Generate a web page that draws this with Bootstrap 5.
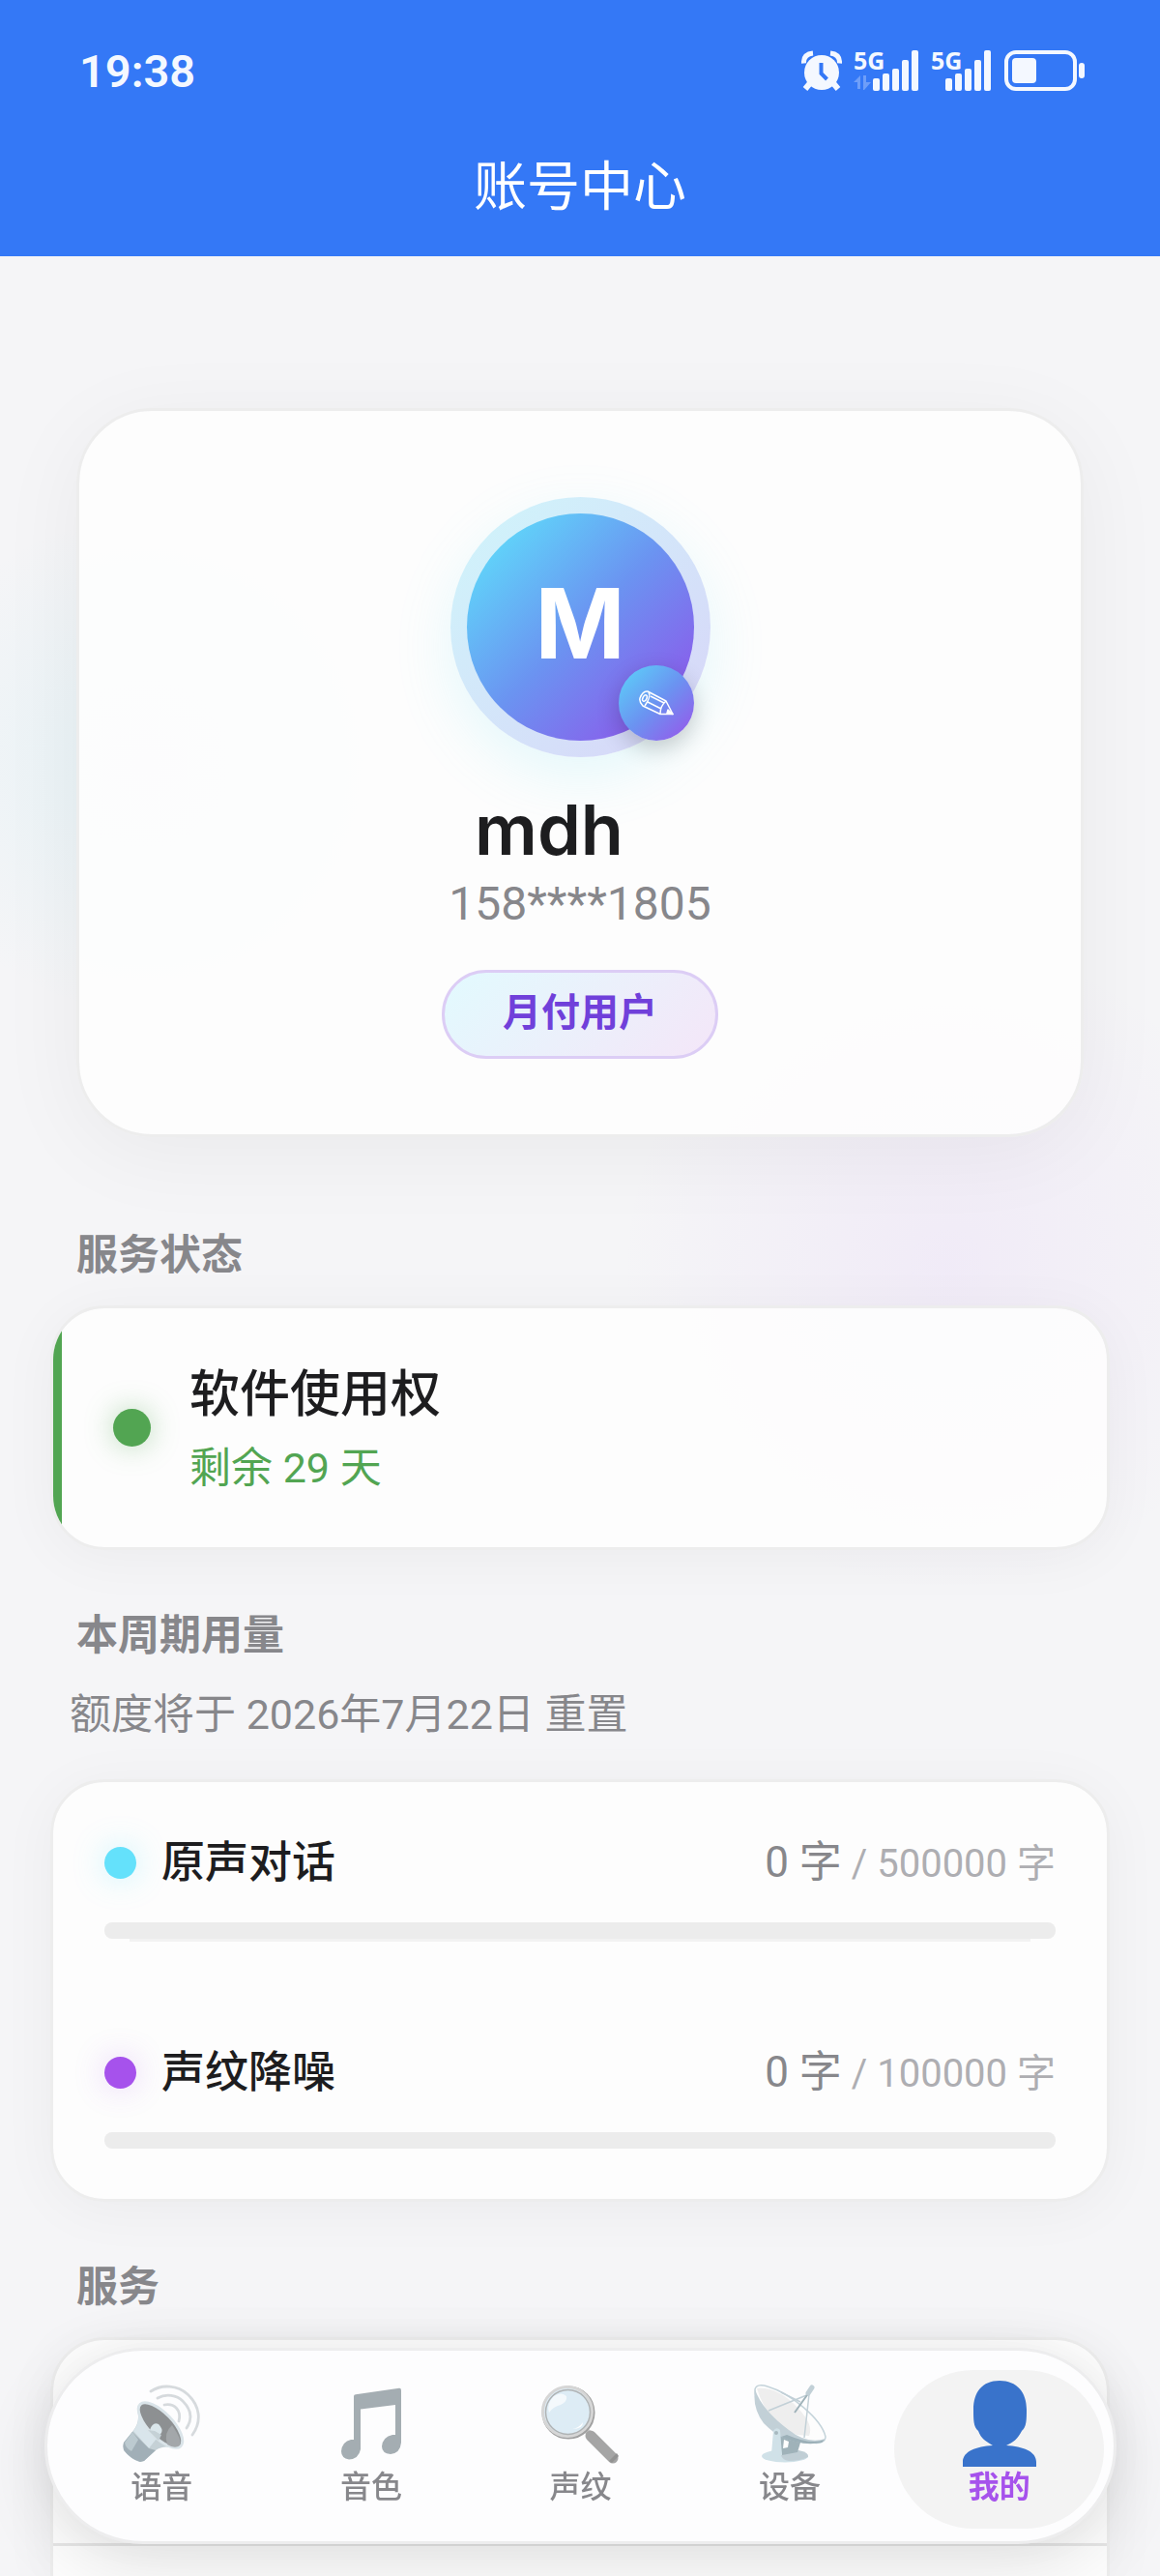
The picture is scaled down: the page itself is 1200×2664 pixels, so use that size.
<!DOCTYPE html>
<html lang="zh-CN">
<head>
<meta charset="utf-8">
<meta name="viewport" content="width=device-width, initial-scale=1">
<title>账号中心</title>
<link href="https://cdn.jsdelivr.net/npm/bootstrap@5.3.0/dist/css/bootstrap.min.css" rel="stylesheet">
<style>
:root{--ink:#1d1d1f;--muted:#87878b;--faint:#aeaeb2;--line:#ededed;--cyan:#64e1fb;--purple:#a652ec;--green:#52a552}
body{font-family:Roboto,"Noto Sans CJK SC",sans-serif;color:var(--ink);background:#f5f5f7}
.app{background:
  radial-gradient(circle at 150px 790px,rgba(100,215,235,.1),rgba(100,215,235,0) 260px),
  radial-gradient(circle at 980px 1310px,rgba(180,100,250,.07),rgba(180,100,250,0) 340px),#f5f5f7}
.top-area{background:#3478f6;color:#fff}
.status-bar{height:146px;padding:0 77px 0 82px}
.clock{font-size:47px;line-height:60px;font-weight:600;color:#f4f8ff;padding-top:2px}
.status-icons{gap:12px}
.page-title{font-size:55px;line-height:90px;font-weight:400;margin:0;padding:2px 0 27px}
.panel{background:rgba(253,253,253,.93);border:3px solid var(--line);border-radius:56px;margin:0 52px;background-clip:padding-box;box-shadow:0 8px 60px rgba(0,0,0,.045)}
.profile{margin:157px 79px 0;border-radius:78px;padding:89px 40px 78px;box-shadow:0 16px 90px rgba(0,0,0,.05)}
.ring{width:269px;height:269px;padding:17px;background:linear-gradient(135deg,#cff6fb,#d8d4f8);box-shadow:0 20px 60px rgba(100,225,245,.16)}
.avatar{background:linear-gradient(135deg,#5ee0fb 5%,#6b93f1 50%,#9052ea 95%);color:#fff;font:700 100px/1 Inter,sans-serif;padding-bottom:8px}
.edit{right:17px;bottom:17px;width:78px;height:78px;background:linear-gradient(135deg,#5ad6fa,#6b93f1 50%,#9b52ea);box-shadow:0 8px 24px rgba(0,0,0,.2)}
.user-name{font:600 72px/84px Inter,sans-serif;margin:33px 64px 5px 0}
.phone{font-size:48px;line-height:60px;color:var(--muted)}
.plan{font-size:40px;line-height:80px;font-weight:700;color:#7040da;padding:2px 60px 4px;margin-top:38px;border:3px solid #dccdf5;background:linear-gradient(135deg,#e2fafe,#f4e6f8)}
.section-title{font-size:43px;line-height:60px;font-weight:700;color:var(--muted);margin:58px 79px 22px}
.section-first{margin-top:92px}
.reset-note{font-size:43px;line-height:60px;color:var(--muted);margin:0 72px 37px}
.license{height:253px;padding-left:62px;gap:40px}
.license-bar{left:0;top:0;bottom:0;width:9px;background:var(--green)}
.license-dot{width:39px;height:39px;background:var(--green);box-shadow:0 0 30px rgba(82,165,82,.4)}
.license-text{padding-top:4px}
.license-name{font-size:52px;line-height:78px;font-weight:500}
.license-left{font-size:43px;line-height:72px;color:var(--green)}
.usage{padding:48px 53px 52px}
.usage-head{height:70px}
.usage-dot{width:33px;height:33px;margin-right:26px}
.dot-cyan{background:var(--cyan);box-shadow:0 0 32px rgba(100,225,251,.35)}
.dot-purple{background:var(--purple);box-shadow:0 0 32px rgba(166,82,236,.25)}
.usage-name{font-size:45px;line-height:70px;font-weight:500;padding-top:2px}
.usage-used{font-size:44px;line-height:70px;color:var(--muted);padding-top:2px}
.usage-total{font-size:40px;color:var(--faint)}
.usage .progress{height:17px;border-radius:8px;background:#ececec;margin-top:27px}
.usage-rule{height:3px;margin:0 26px 100px;background:#f2f2f2}
.service-list{border-bottom:0;border-radius:56px 56px 0 0}
.service-row{height:213px;border-bottom:3px solid #e6e6e6}
.tabs{margin:0 45px 33px 46px;padding:20px 10px 13px;border:3px solid #ededee;border-radius:102px;background:#fdfdfe;box-shadow:0 20px 70px rgba(0,0,0,.11),0 0 60px rgba(0,0,0,.04)}
.tab{height:164px;border-radius:82px;color:var(--muted);font-size:32px;line-height:42px;font-weight:500;padding-top:11px;text-decoration:none;flex:1 1 0}
.tab svg{display:block;height:89px}
.tab.active{background:#f3f3f3;color:var(--purple);font-weight:700}
</style>
<script src="https://cdn.jsdelivr.net/npm/bootstrap@5.3.0/dist/js/bootstrap.bundle.min.js"></script>
</head>
<body>
<div class="app vh-100 overflow-hidden d-flex flex-column">
  <header class="top-area text-center flex-shrink-0">
    <div class="status-bar d-flex align-items-center justify-content-between">
      <span class="clock">19:38</span>
      <div class="status-icons d-flex align-items-center">
        <svg width="42" height="42" viewBox="0 0 42 42" fill="#f4f8ff" stroke="#f4f8ff"><circle cx="21" cy="23" r="18" stroke="none"/><path d="M2.500 13.500Q2 4 12 3M39.500 13.500Q40 4 30 3" fill="none" stroke-width="5"/><path d="M9 34l-5 6M33 34l5 6" stroke-width="6"/><path d="M20.500 13v11l6 6" fill="none" stroke="#3478f6" stroke-width="4"/></svg>
        <svg width="68" height="64" viewBox="0 -10 68 64" fill="#f4f8ff"><text x="0" y="21" font-family="Open Sans" font-weight="700" font-size="25">5G</text><path d="M0 34l7-7v14H4v-7zM10 27h3v7h5l-7 8h-1z" opacity=".3"/><rect x="20" y="30" width="7" height="13" rx="2"/><rect x="30" y="25" width="7" height="18" rx="2"/><rect x="40" y="20" width="7" height="23" rx="2"/><rect x="50" y="11" width="7" height="32" rx="2"/><rect x="60" y="1" width="7" height="42" rx="2"/></svg>
        <svg width="64" height="64" viewBox="0 -10 64 64" fill="#f4f8ff"><text x="0" y="21" font-family="Open Sans" font-weight="700" font-size="25">5G</text><rect x="15" y="30" width="7" height="13" rx="2"/><rect x="25" y="25" width="7" height="18" rx="2"/><rect x="35" y="20" width="7" height="23" rx="2"/><rect x="45" y="11" width="7" height="32" rx="2"/><rect x="55" y="1" width="7" height="42" rx="2"/></svg>
        <svg width="84" height="44" viewBox="0 0 84 44" fill="#f4f8ff"><rect x="2" y="3" width="71" height="38" rx="10" fill="none" stroke="#f4f8ff" stroke-width="4"/><rect x="8" y="9" width="25" height="26" rx="4"/><rect x="77" y="14" width="6" height="16" rx="3"/></svg>
      </div>
    </div>
    <h1 class="page-title">账号中心</h1>
  </header>

  <main class="d-flex flex-column flex-grow-1">
    <section class="panel profile d-flex flex-column align-items-center">
      <div class="ring rounded-circle position-relative">
        <div class="avatar rounded-circle w-100 h-100 d-flex align-items-center justify-content-center">M</div>
        <button type="button" class="edit btn p-0 border-0 rounded-circle position-absolute d-flex align-items-center justify-content-center" aria-label="编辑">
          <svg width="36" height="26" viewBox="0 0 36 26" fill="none" stroke="#fff" stroke-width="1.500" stroke-linejoin="round"><path d="M9 1L28 11 35 24.500H22L4 16Q0 12 1 8 4 0 9 1z"/><path d="M28 11Q22 16 22 24M10 2Q13 6 6 16M12 6l14 7M9 12l14 7"/><ellipse cx="6" cy="8" rx="2" ry="3.500" transform="rotate(25 6 8)"/><path d="M30 20l5 4.500-6-1z" fill="#fff"/></svg>
        </button>
      </div>
      <h2 class="user-name">mdh</h2>
      <div class="phone">158****1805</div>
      <div class="plan rounded-pill">月付用户</div>
    </section>

    <h3 class="section-title section-first">服务状态</h3>
    <section class="panel license d-flex align-items-center position-relative overflow-hidden flex-shrink-0">
      <div class="license-bar position-absolute"></div>
      <div class="license-dot rounded-circle"></div>
      <div class="license-text">
        <div class="license-name">软件使用权</div>
        <div class="license-left">剩余 29 天</div>
      </div>
    </section>

    <h3 class="section-title">本周期用量</h3>
    <p class="reset-note">额度将于 2026年7月22日 重置</p>
    <section class="panel usage">
      <div class="usage-head d-flex align-items-center">
        <span class="usage-dot dot-cyan rounded-circle"></span>
        <span class="usage-name me-auto">原声对话</span>
        <span class="usage-used">0 字<span class="usage-total"> / 500000 字</span></span>
      </div>
      <div class="progress" role="progressbar" aria-label="原声对话" aria-valuenow="0" aria-valuemin="0" aria-valuemax="500000"><div class="progress-bar" style="width:0%"></div></div>
      <div class="usage-rule"></div>
      <div class="usage-head d-flex align-items-center">
        <span class="usage-dot dot-purple rounded-circle"></span>
        <span class="usage-name me-auto">声纹降噪</span>
        <span class="usage-used">0 字<span class="usage-total"> / 100000 字</span></span>
      </div>
      <div class="progress" role="progressbar" aria-label="声纹降噪" aria-valuenow="0" aria-valuemin="0" aria-valuemax="100000"><div class="progress-bar" style="width:0%"></div></div>
    </section>

    <h3 class="section-title">服务</h3>
    <section class="panel service-list flex-grow-1">
      <div class="service-row"></div>
    </section>
  </main>

  <nav class="tabs fixed-bottom d-flex" aria-label="主导航">
    <a href="#voice" class="tab d-flex flex-column align-items-center">
      <svg width="80" viewBox="0 -4 80 89" fill="none">
        <g stroke="#d6dadd" stroke-width="2.800" stroke-linecap="round"><path d="M29 7C41-1 57 1 67 10 80 22 82 38 72 52"/><path d="M36 14C45 9 56 11 62 17 71 26 72 36 66 45"/><path d="M43 21C53 19 61 26 58 38"/></g>
        <path d="M15 25C18 38 14 44 9 50L1 60Q-1 66 3 70 10 78 18 80L22 79 34 68Q42 62 54 66z" fill="#c5d1d6"/>
        <path d="M15 25C18 38 14 44 11 48L27 66 38 52z" fill="#d9e5eb"/>
        <path d="M10 49L27 66 34 68 22 79 18 80Q8 77 1 68 0 63 1 60z" fill="#a1afb7"/>
        <path d="M10 49L16 57 9 69Q3 66 2 60z" fill="#bccad0"/>
        <ellipse cx="39" cy="42" rx="30" ry="12.500" transform="rotate(46 39 42)" fill="#8d9092" stroke="#dae4e9" stroke-width="3"/>
        <path d="M51 42Q42 50 46 62 54 67 59 63 62 58 51 42z" fill="#a3a7aa"/>
        <path d="M28 47Q31 38 37 41 42 46 40 50L35 55z" fill="#dae6eb"/><path d="M26 47L37 58 40 52 33 48z" fill="#c5d1d6"/>
      </svg>
      <span>语音</span>
    </a>
    <a href="#timbre" class="tab d-flex flex-column align-items-center">
      <svg width="62" viewBox="0 -7 62 89" fill="#a4adb2"><path d="M13 9Q13 7.500 15 7.300L60 .7Q62 .5 62 3V57Q61 68 51 69 42 68 42 61 43 51 53 49L56 49V18L20 22.500V64Q18 74 8 74.500 0 73 0 66 1 56 10 54L13 54z"/></svg>
      <span>音色</span>
    </a>
    <a href="#voiceprint" class="tab d-flex flex-column align-items-center">
      <svg width="80" viewBox="0 -4 80 89" fill="none">
        <path d="M46 47l7 7" stroke="#c9c9c9" stroke-width="6"/><path d="M51 53L74 76" stroke="#a5a5a5" stroke-width="11" stroke-linecap="round"/><path d="M70 79l8-8 2 3-7 7z" fill="#929292"/>
        <circle cx="28" cy="29" r="26" stroke="#a0a0a0" stroke-width="3"/><circle cx="27" cy="28" r="25.500" fill="#ddecf5" stroke="#d6d6d6" stroke-width="3"/><circle cx="27.500" cy="28.500" r="23" stroke="#b0b3b4" stroke-width="1.500"/>
        <path d="M8 29Q5 20 13 12 21 7 26 12 27 18 20 21 12 23 8 29z" fill="#f4f9fc"/><path d="M32 46Q39 45 43 39 43 46 32 46z" fill="#fff"/>
      </svg>
      <span>声纹</span>
    </a>
    <a href="#device" class="tab d-flex flex-column align-items-center">
      <svg width="75" viewBox="0 -4 75 89" fill="none">
        <ellipse cx="32" cy="74" rx="24" ry="6.500" fill="#d0e1e8"/><path d="M28 73L46 68Q57 70 56 75 48 79 36 79 29 78 28 73z" fill="#c0ced5"/>
        <path d="M24 46L48 60 45 70 29 73z" fill="#9fb2b9"/><path d="M31 57l5 2-1 6-5 1z" fill="#fff"/>
        <path d="M1 5C2 0 8 0 14 2 38 9 70 36 74 54 74 60 66 62 56 59 30 50 0 24 1 5z" fill="#fdfdfd" stroke="#c4d3da" stroke-width="1.500"/>
        <path d="M3 4Q25 2 46 25 62 42 57 53L44 52Q14 40 3 4z" fill="#eee"/>
        <path d="M1 5Q-2 24 10 40 20 50 28 54 48 63 70 60L74 56Q55 62 36 47 8 26 1 5z" fill="#c2d0d7"/><path d="M28 54Q50 64 70 60L73 57Q60 63 34 52z" fill="#9cb0b8"/>
        <path d="M15 27L57 10 52 55M28 8L48 18" stroke="#c2d0d7" stroke-width="1.500"/><path d="M42 29L57 8" stroke="#9fb2b9" stroke-width="2"/><path d="M56 9l4-6" stroke="#c2d0d7" stroke-width="5" stroke-linecap="round"/>
        <path d="M18 72L20 48Q23 43 27 47L29 73z" fill="#d0e1e8"/><circle cx="23" cy="50" r="2" fill="#a7b8bf"/>
      </svg>
      <span>设备</span>
    </a>
    <a href="#me" class="tab active d-flex flex-column align-items-center" aria-current="page">
      <svg width="76" viewBox="0 0 76 89" fill="#3973cb"><path d="M38 0C56 0 66 12 66 30 66 40 66 48 61 52 57 60 52 64 45 67 62 68 76 73 76 84V89H0V84C0 73 14 68 31 67 24 63 19 60 16 52 11 48 11 40 11 30 11 12 20 0 38 0z"/></svg>
      <span>我的</span>
    </a>
  </nav>
</div>
</body>
</html>
